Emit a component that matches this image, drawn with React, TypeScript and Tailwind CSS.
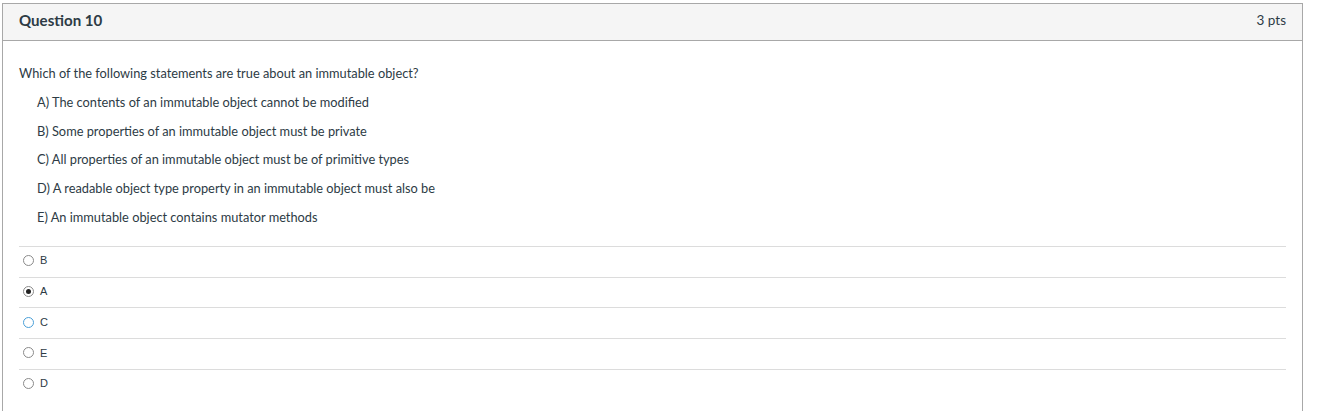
import React from 'react';

const statements = [
    'A) The contents of an immutable object cannot be modified',
    'B) Some properties of an immutable object must be private',
    'C) All properties of an immutable object must be of primitive types',
    'D) A readable object type property in an immutable object must also be',
    'E) An immutable object contains mutator methods',
];

const answers = [
    {label: 'B', checked: false, focused: false},
    {label: 'A', checked: true, focused: false},
    {label: 'C', checked: false, focused: true},
    {label: 'E', checked: false, focused: false},
    {label: 'D', checked: false, focused: false},
];

function Radio({checked, focused}: {checked: boolean; focused: boolean}) {
    return (
        <span
            className={
                'flex items-center justify-center w-[11px] h-[11px] rounded-full border bg-white ' +
                (focused ? 'border-[#4a9fd8]' : 'border-[#8a8a8a]')
            }
        >
            {checked && <span className="w-[5px] h-[5px] rounded-full bg-[#222]"/>}
        </span>
    );
}

export default function App() {
    return (
        <div className="w-full bg-white pt-[3px] pl-[2px] pr-[18px] font-['Lato','Liberation_Sans',sans-serif] text-[#2d3b45]">
            <div className="border border-[#a8a8a8] border-b-0 h-[408px]">
                <div className="flex items-center justify-between h-[37px] pb-[3px] bg-[#f5f5f5] border-b border-[#a8a8a8] pl-[16px] pr-[16px]">
                    <h2 className="text-[15.1px] font-bold text-[#2d3b45]">Question 10</h2>
                    <span className="text-[13.5px] text-[#2d3b45]">3 pts</span>
                </div>
                <div className="pl-[16px] pr-[16px] pt-[24px]">
                    <p className="text-[12.8px] leading-[16px]">Which of the following statements are true about an immutable object?</p>
                    <div className="pl-[18px]">
                        {statements.map((s, i) => (
                            <p key={i} className="text-[12.8px] leading-[16px] mt-[12.75px]">{s}</p>
                        ))}
                    </div>
                    <div className="mt-[21px]">
                        {answers.map((a, i) => (
                            <div key={i} className="flex items-center gap-[6px] h-[30.75px] pb-[2px] border-t border-[#dcdcdc] pl-[4px]">
                                <Radio checked={a.checked} focused={a.focused}/>
                                <span className="text-[11px] font-['Liberation_Sans',sans-serif] text-[#2d3b45]">{a.label}</span>
                            </div>
                        ))}
                    </div>
                </div>
            </div>
        </div>
    );
}
